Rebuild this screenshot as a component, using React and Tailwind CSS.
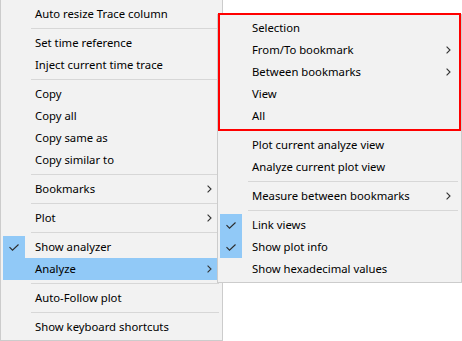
import React from "react";

const Check = () => (
  <svg width="10" height="7" viewBox="0 0 10 7" className="block">
    <polyline points="0.5,3.2 3.5,6.2 9.5,0.5" fill="none" stroke="#2b2b2b" strokeWidth="1.1" />
  </svg>
);

const Chevron = () => (
  <svg width="5" height="8" viewBox="0 0 5 8" className="block">
    <polyline points="0.6,0.6 4,4 0.6,7.4" fill="none" stroke="#333333" strokeWidth="1.1" />
  </svg>
);

function Item({ label, sub, checked, active }) {
  return (
    <div className={`flex h-[22px] items-center ${active ? "bg-[#91c9f7]" : ""}`}>
      <div className={`flex h-[22px] w-[22px] shrink-0 items-center justify-center ${checked ? "bg-[#91c9f7]" : ""}`}>
        {checked ? <Check /> : null}
      </div>
      <div className="ml-[10px] flex-1 whitespace-nowrap text-black">{label}</div>
      {sub ? (
        <div className="mr-[8px]">
          <Chevron />
        </div>
      ) : null}
    </div>
  );
}

const Sep = () => (
  <div className="flex h-[7px] items-center">
    <div className="ml-[28px] mr-[1px] h-px flex-1 bg-[#d7d7d7]" />
  </div>
);

export default function App() {
  return (
    <div
      className="relative h-[341px] w-[462px] overflow-hidden bg-white text-[11.3px] leading-none"
      style={{ fontFamily: '"Segoe UI", "Noto Sans", "Open Sans", sans-serif' }}
    >
      <div className="w-[223px] border-x border-b border-[#cccccc] bg-[#f2f2f2] px-[2px] pt-[3px] pb-[2px]">
        <Item label="Auto resize Trace column" />
        <Sep />
        <Item label="Set time reference" />
        <Item label="Inject current time trace" />
        <Sep />
        <Item label="Copy" />
        <Item label="Copy all" />
        <Item label="Copy same as" />
        <Item label="Copy similar to" />
        <Sep />
        <Item label="Bookmarks" sub />
        <Sep />
        <Item label="Plot" sub />
        <Sep />
        <Item label="Show analyzer" checked />
        <Item label="Analyze" sub active />
        <Sep />
        <Item label="Auto-Follow plot" />
        <Sep />
        <Item label="Show keyboard shortcuts" />
      </div>

      <div className="absolute left-[217px] top-[14px] w-[245px] border border-[#cccccc] bg-[#f2f2f2] px-[2px] py-[2px]">
        <Item label="Selection" />
        <Item label="From/To bookmark" sub />
        <Item label="Between bookmarks" sub />
        <Item label="View" />
        <Item label="All" />
        <Sep />
        <Item label="Plot current analyze view" />
        <Item label="Analyze current plot view" />
        <Sep />
        <Item label="Measure between bookmarks" sub />
        <Sep />
        <Item label="Link views" checked />
        <Item label="Show plot info" checked />
        <Item label="Show hexadecimal values" />
      </div>

      <div className="absolute left-[218px] top-[13px] h-[118px] w-[243px] border-2 border-[#ff0000]" />
    </div>
  );
}
